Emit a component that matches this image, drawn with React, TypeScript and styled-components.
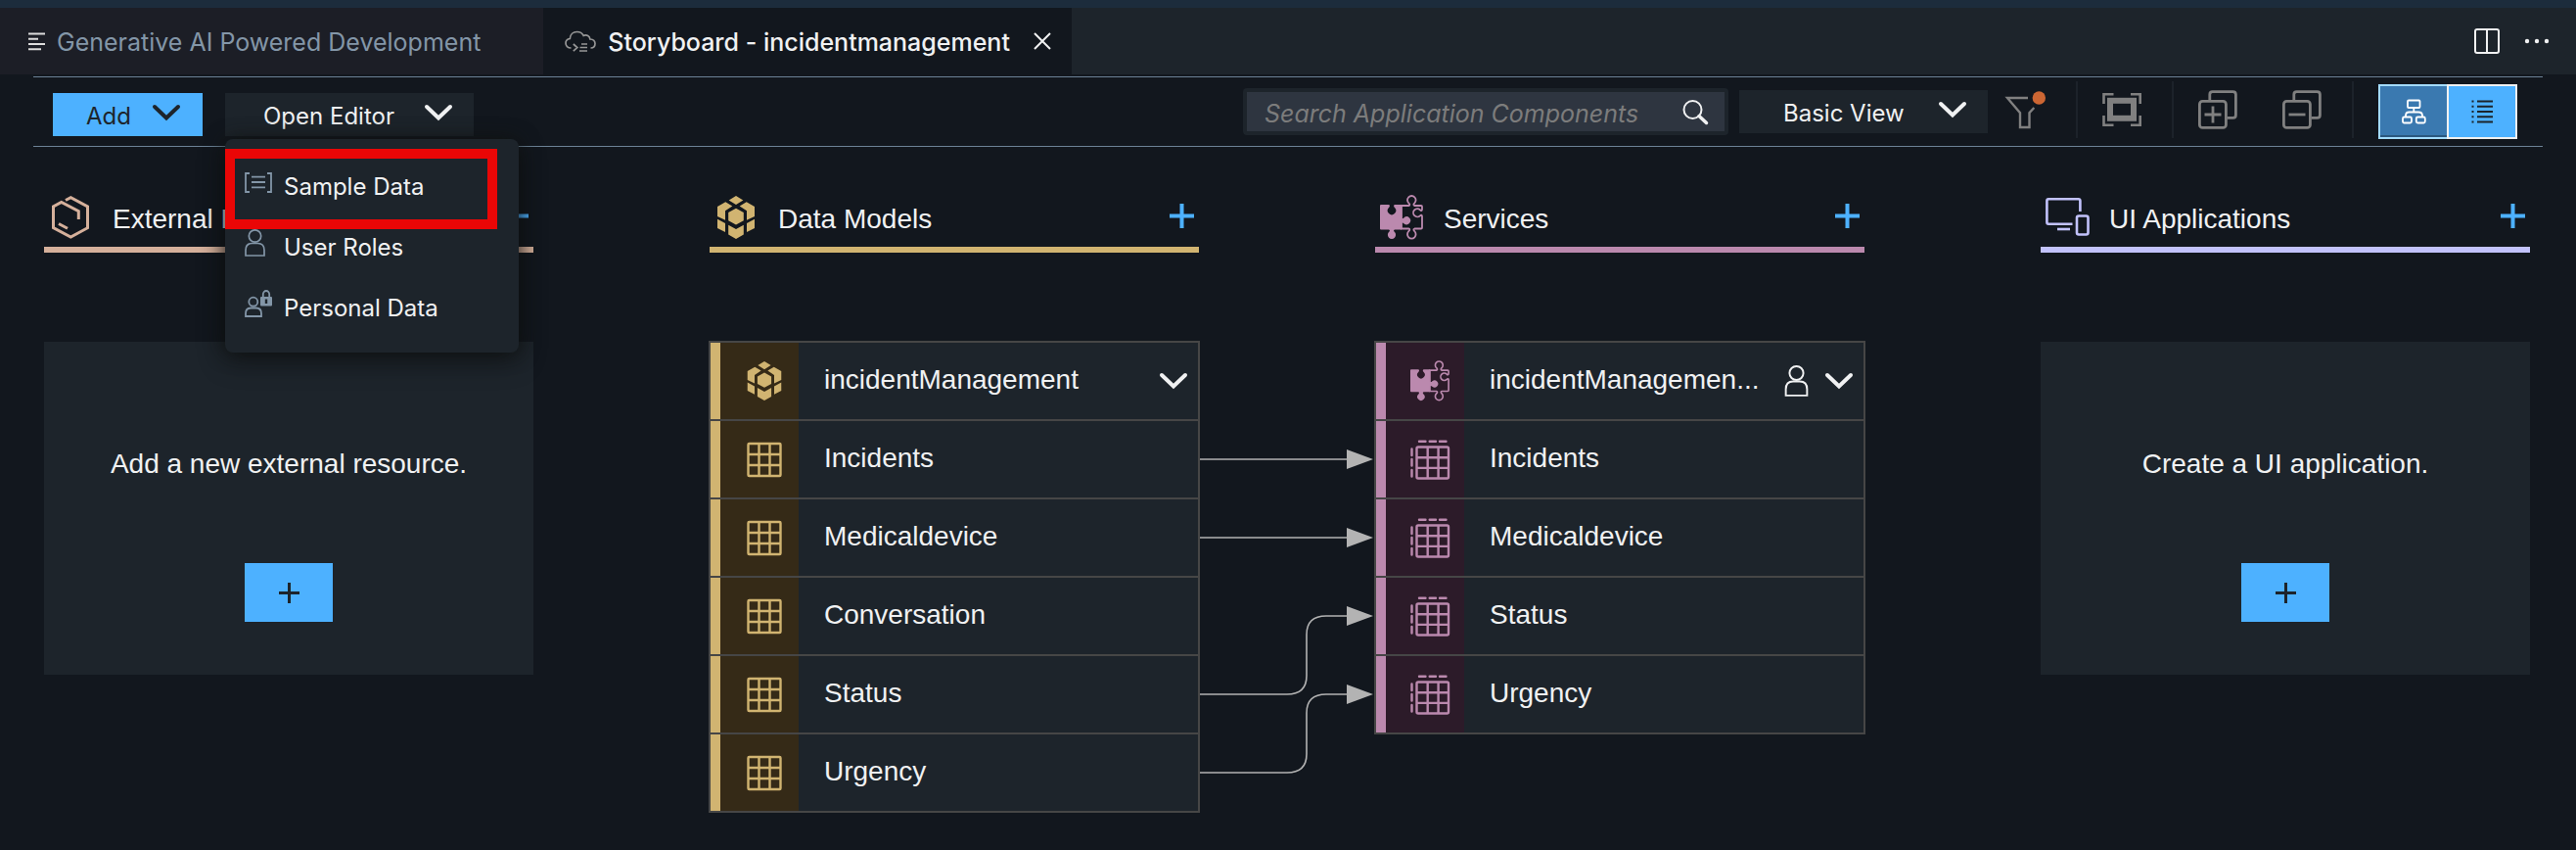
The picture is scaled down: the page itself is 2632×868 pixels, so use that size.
import React from 'react';
import styled, { createGlobalStyle } from 'styled-components';

const color = {
  page: '#12171e',
  surface: '#1d242b',
  tab: '#1c1e26',
  strip: '#1c2c3c',
  rule: '#6c8296',
  divider: '#1c222a',
  text: '#f0f1f2',
  muted: '#8396a8',
  toolIcon: '#808080',
  accent: '#4db1ff',
  nodeBorder: '#464646',
  wire: '#b3b3b3',
};

const uiFont = `Inter, 'Liberation Sans', sans-serif`;
const bodyFont = `'Liberation Sans', Arial, sans-serif`;

const GlobalStyle = createGlobalStyle`
  *, *::before, *::after { box-sizing: border-box; }
  body { margin: 0; background: ${color.page}; color: ${color.text}; font-family: ${bodyFont}; }
  button, input, select { font: inherit; color: inherit; border: 0; padding: 0; margin: 0; background: none; border-radius: 0; }
  button { cursor: pointer; }
  h1, h2, h3, p, ul { margin: 0; padding: 0; font: inherit; list-style: none; }
  svg { display: block; flex: none; overflow: visible; }
`;

/* ---------- layout ---------- */

const Page = styled.div`
  min-height: 100vh;
  background: ${color.page};
`;

const TabBar = styled.header`
  display: flex;
  height: 76px;
  border-top: 8px solid ${color.strip};
  background: ${color.surface};
  font-family: ${uiFont};
  font-size: 25px;
`;

const Tab = styled.div<{ $active?: boolean }>`
  display: flex;
  align-items: center;
  gap: 12px;
  padding: ${p => (p.$active ? '0 21px 0 22px' : '0 64px 0 29px')};
  background: ${p => (p.$active ? color.page : color.tab)};
  color: ${p => (p.$active ? color.text : color.muted)};
  font-weight: ${p => (p.$active ? 500 : 400)};
  white-space: nowrap;
`;

const TabLink = styled.a`
  padding-top: 2px;
  color: inherit;
  text-decoration: none;
`;

const TabClose = styled.button`
  margin-left: 12px;
`;

const TabActions = styled.div`
  display: flex;
  align-items: center;
  gap: 25px;
  margin-left: auto;
  padding-right: 27px;
`;

const Toolbar = styled.nav`
  display: flex;
  align-items: center;
  justify-content: space-between;
  height: 72px;
  margin: 2px 34px 0;
  padding: 0 26px 0 20px;
  border-top: 1px solid ${color.rule};
  border-bottom: 1px solid ${color.rule};
  font-family: ${uiFont};
  font-size: 24px;
`;

const ToolbarStart = styled.div`
  display: flex;
  gap: 23px;
  padding-top: 6px;
`;

const ToolbarEnd = styled.div`
  display: flex;
  align-items: center;
`;

const PrimaryButton = styled.button`
  display: flex;
  align-items: center;
  justify-content: space-between;
  width: 153px;
  height: 44px;
  padding: 0 23px 0 34px;
  background: ${color.accent};
  color: ${color.surface};
`;

const ButtonText = styled.span`
  padding-top: 3px;
`;

const ButtonArrow = styled.span`
  padding-bottom: 4px;
`;

const MenuAnchor = styled.div`
  position: relative;
`;

const MenuButton = styled.button`
  display: flex;
  align-items: center;
  justify-content: space-between;
  width: 254px;
  height: 44px;
  padding: 0 22px 0 39px;
  background: ${color.surface};
`;

const Menu = styled.ul`
  position: absolute;
  z-index: 2;
  top: calc(100% + 3px);
  left: 0;
  width: 300px;
  padding: 17px 0 15px;
  border-radius: 8px;
  background: ${color.surface};
  box-shadow: 0 8px 28px rgba(0, 0, 0, 0.4), 0 0 20px rgba(20, 22, 20, 0.8);
`;

const MenuItem = styled.button`
  display: flex;
  align-items: center;
  gap: 12px;
  width: 100%;
  height: 62px;
  padding: 0 20px;
  text-align: left;
`;

const MenuIcon = styled.span`
  display: flex;
  width: 28px;
  padding-bottom: 8px;
  color: ${color.muted};
`;

const Highlight = styled.div`
  position: absolute;
  top: 10px;
  left: 0;
  width: 278px;
  height: 82px;
  border: 10px solid #ea0606;
  pointer-events: none;
`;

const SearchBox = styled.label`
  display: flex;
  align-items: center;
  width: 496px;
  height: 48px;
  margin-right: 11px;
  padding: 0 17px 0 18px;
  border: 4px solid ${color.surface};
  border-radius: 4px;
  background: #2e3540;
`;

const SearchInput = styled.input.attrs({ type: 'text' })`
  flex: 1;
  min-width: 0;
  padding-top: 3px;
  font-family: ${uiFont};
  font-size: 25px;
  font-style: italic;
  outline: none;
  &::placeholder { color: #7c7c7c; opacity: 1; }
`;

const SelectBox = styled.div`
  position: relative;
  width: 254px;
  height: 44px;
  background: ${color.surface};
`;

const Select = styled.select`
  width: 100%;
  height: 100%;
  padding: 3px 60px 0 45px;
  appearance: none;
`;

const SelectArrow = styled.span`
  position: absolute;
  top: 12px;
  right: 22px;
  pointer-events: none;
`;

const ToolGroup = styled.div<{ $first?: boolean }>`
  display: flex;
  align-items: center;
  gap: 46px;
  height: 58px;
  margin-bottom: 4px;
  padding: ${p => (p.$first ? '0 31px 0 19px' : '0 31px 0 25px')};
  border-right: 2px solid ${color.divider};
  color: ${color.toolIcon};
`;

const Toggle = styled.div`
  display: flex;
  margin-left: 25px;
`;

const ToggleButton = styled.button<{ $on?: boolean }>`
  display: flex;
  align-items: center;
  justify-content: center;
  width: ${p => (p.$on ? 70 : 72)}px;
  height: 56px;
  border: 2px solid ${p => (p.$on ? '#a3dcff' : '#f0f0f0')};
  border-right-width: ${p => (p.$on ? 0 : 2)}px;
  background: ${p => (p.$on ? '#3a79b0' : color.accent)};
  box-shadow: ${p => (p.$on ? 'inset 0 -2px 0 #2b587f' : 'none')};
  color: ${p => (p.$on ? '#ffffff' : color.surface)};
`;

const Board = styled.main`
  display: grid;
  grid-template-columns: repeat(4, minmax(0, 1fr));
  gap: 180px;
  align-items: start;
  padding: 42px 47px 38px 45px;
  font-size: 28px;
  line-height: 32px;
`;

const ColumnHeader = styled.div<{ $tint: string }>`
  display: flex;
  align-items: center;
  gap: 21px;
  height: 66px;
  padding: 0 5px;
  border-bottom: 6px solid ${p => p.$tint};
  color: ${p => p.$tint};
`;

const ColumnTitle = styled.h2`
  flex: 1;
  padding-top: 4px;
  color: ${color.text};
  white-space: nowrap;
`;

const AddLink = styled.button`
  padding-bottom: 3px;
  color: ${color.accent};
`;

const Card = styled.div`
  display: flex;
  flex-direction: column;
  align-items: center;
  margin-top: 91px;
  padding: 109px 16px 54px;
  background: ${color.surface};
`;

const CardButton = styled.button`
  display: flex;
  align-items: center;
  justify-content: center;
  width: 90px;
  height: 60px;
  margin-top: 85px;
  background: ${color.accent};
  color: ${color.surface};
`;

const Node = styled.div`
  position: relative;
  margin: 90px -1px 0;
  border: 2px solid ${color.nodeBorder};
  background: ${color.surface};
`;

const NodeRow = styled.div`
  display: flex;
  align-items: center;
  height: 78px;
  & + & { height: 80px; border-top: 2px solid ${color.nodeBorder}; }
`;

const NodeIcon = styled.span<{ $tint: string; $shade: string }>`
  display: flex;
  align-items: center;
  align-self: stretch;
  width: 90px;
  padding-left: 25px;
  border-left: 10px solid ${p => p.$tint};
  background: ${p => p.$shade};
  color: ${p => p.$tint};
`;

const NodeLabel = styled.span`
  flex: 1;
  padding: 0 0 2px 26px;
  white-space: nowrap;
`;

const NodeActions = styled.span`
  display: flex;
  align-items: center;
  gap: 17px;
  padding-right: 11px;
`;

const Wires = styled.svg`
  position: absolute;
  top: 0;
  left: calc(100% + 2px);
  pointer-events: none;
`;

/* ---------- icons ---------- */

type StrokeProps = { w: number; h: number; sw?: number; children: React.ReactNode };

const Line = ({ w, h, sw = 2, children }: StrokeProps) => (
  <svg width={w} height={h} viewBox={`0 0 ${w} ${h}`} fill="none" stroke="currentColor" strokeWidth={sw} aria-hidden="true">
    {children}
  </svg>
);

const Chevron = () => (
  <Line w={28} h={16} sw={4}>
    <path d="M2 2 14 13.5 26 2" strokeLinecap="round" />
  </Line>
);

const Plus = ({ size, sw }: { size: number; sw: number }) => (
  <Line w={size} h={size} sw={sw}>
    <path d={`M${size / 2} 0V${size}M0 ${size / 2}H${size}`} />
  </Line>
);

const ListIcon = () => (
  <svg width="17" height="19" viewBox="0 0 17 19" fill="none" stroke="#dcdcdc" strokeWidth="2" aria-hidden="true">
    <path d="M0 1.5H17M0 6.8H10M0 12H17M0 17.3H13" />
  </svg>
);

const CloudIcon = () => (
  <svg width="32" height="22" viewBox="0 0 32 22" fill="none" stroke="#969696" strokeWidth="1.7" aria-hidden="true">
    <path d="M6.5 18C3 18 1 15.800 1 13 1 10.300 3 8.800 5.300 8.500 5.600 4 8.700 1.500 12.500 1.500 15.500 1.500 18 3 19.200 5.400 22.500 4 25.700 6 25.900 9 29 9.200 31 11 31 13.500 31 16.300 29 18 26.500 18" />
    <path d="M8.800 14l4 3.600-4 3.600M17 14h6M15.500 17.500h7.500M15 21h8" />
  </svg>
);

const CloseIcon = () => (
  <Line w={18} h={18} sw={2}>
    <path d="M1 1 17 17M17 1 1 17" />
  </Line>
);

const SplitIcon = () => (
  <Line w={26} h={26} sw={2}>
    <rect x="1" y="1" width="24" height="24" rx="2" />
    <path d="M13 1V25" />
  </Line>
);

const MoreIcon = () => (
  <svg width="26" height="6" viewBox="0 0 26 6" fill="currentColor" aria-hidden="true">
    <circle cx="3" cy="3" r="2.200" />
    <circle cx="13" cy="3" r="2.200" />
    <circle cx="23" cy="3" r="2.200" />
  </svg>
);

const SampleIcon = () => (
  <Line w={28} h={21} sw={1.8}>
    <path d="M5 1H1V20H5M23 1H27V20H23M7 4.700H21M7 10H21M7 15.300H21" />
  </Line>
);

const UserIcon = ({ w, h }: { w: number; h: number }) => (
  <svg width={w} height={h} viewBox="0 0 21 28" fill="none" stroke="currentColor" strokeWidth="1.7" aria-hidden="true">
    <circle cx="10.500" cy="7" r="6.200" />
    <path d="M1 27V21.500Q1 14.500 7.500 14.500H13.500Q20 14.500 20 21.500V27Z" />
  </svg>
);

const PrivacyIcon = () => (
  <Line w={28} h={28} sw={1.8}>
    <circle cx="8.800" cy="12.200" r="4.500" />
    <path d="M1 27V24Q1 18.500 6.500 18.500H11.500Q17 18.500 17 24V27Z" />
    <path d="M18.800 8V4.500a3.200 3.500 0 0 1 6.400 0V8" />
    <rect x="16" y="7" width="12" height="9.500" rx="1" fill="currentColor" stroke="none" />
    <path d="M22 9.500V14" stroke={color.surface} strokeWidth="2.400" />
  </Line>
);

const SearchIcon = () => (
  <svg width="26" height="25" viewBox="0 0 26 25" fill="none" stroke={color.text} aria-hidden="true">
    <circle cx="10.500" cy="10" r="9" strokeWidth="2" />
    <path d="M17 16.500 24.500 23.500" strokeWidth="3.500" strokeLinecap="round" />
  </svg>
);

const FilterIcon = () => (
  <Line w={40} h={40} sw={2.4}>
    <path d="M22 8H1L14 23.300V38H23.500V23.300L28.300 18" />
    <circle cx="33.300" cy="8" r="6.700" fill="#cc6633" stroke="none" />
  </Line>
);

const FitIcon = () => (
  <Line w={40} h={40} sw={2.6}>
    <path d="M1.500 14V4.300H11.500M29 4.300H38.700V14M38.700 26V35.700H29M11.500 35.700H1.500V26" />
    <rect x="8" y="10.800" width="24" height="18" strokeWidth="6" />
  </Line>
);

const CopyIcon = ({ minus }: { minus?: boolean }) => (
  <Line w={40} h={40} sw={2.8}>
    <path d="M11.800 11V4.500Q11.800 1.600 14.600 1.600H35.500Q38.400 1.600 38.400 4.500V25.500Q38.400 28.400 35.500 28.400H29.500" />
    <rect x="1.400" y="11.400" width="27" height="27" rx="3" />
    <path d={minus ? 'M6.500 25H23.500' : 'M6.500 25H23.500M15 16.500V33.500'} />
  </Line>
);

const TreeIcon = () => (
  <Line w={25} h={26} sw={1.8}>
    <rect x="6" y="1.500" width="12.500" height="7.500" rx="1" />
    <path d="M12.300 9V13.500M4 18.500V17Q4 13.500 7.500 13.500H17Q21 13.500 21 17V18.500" />
    <rect x="1" y="18.500" width="9" height="6" rx="1.500" />
    <rect x="14.800" y="18.500" width="9" height="6" rx="1.500" />
  </Line>
);

const RowsIcon = () => (
  <Line w={23} h={26} sw={2}>
    <path d="M6 2.500H22M6 7.700H22M6 13H22M6 18.300H22M6 23.500H22" />
    <path d="M0.500 2.500H2.500M0.500 7.700H2.500M0.500 13H2.500M0.500 18.300H2.500M0.500 23.500H2.500" />
  </Line>
);

const HexIcon = () => (
  <Line w={44} h={44} sw={3}>
    <path d="M17 4.500 22.300 1.700 39.500 11V32.700L22.300 42 4.500 32.700V11L12.700 6.500 30.300 15.700V24M10 28.500 19 33.300" />
  </Line>
);

const CubeIcon = ({ size = 44 }: { size?: number }) => (
  <svg width={size} height={size} viewBox="0 0 44 44" fill="currentColor" aria-hidden="true">
    <path d="M22 0 29.300 4.500 22 9 14.700 4.500Z" />
    <path d="M3 11 11.300 6.300 18.300 10.500 11 15.300V24.800L3 21Z" />
    <path d="M41 11 32.700 6.300 25.700 10.500 33 15.300V24.800L41 21Z" />
    <path d="M22 12.700 29.800 17V25.200L22 29.500 14.200 25.200V17Z" />
    <path d="M3 23.700 11 28V37L3 33Z" />
    <path d="M41 23.700 33 28V37L41 33Z" />
    <path d="M14.200 29.800 22 34 29.800 29.800V39.500L22 44 14.200 39.500Z" />
  </svg>
);

const PuzzleIcon = ({ size = 44 }: { size?: number }) => (
  <svg width={size} height={size} viewBox="0 0 44 44" fill="currentColor" aria-hidden="true">
    <path d="M1 9H9C10.500 9.500 10 11 9 12A4.200 4.200 0 1 0 15 12C14 11 13.500 9.500 15 9H22V23.200Q23.800 23.400 24.600 22.200A4 4 0 1 1 24.600 28.400Q23.800 27.400 22 27.600V34.400H15C13.500 34.800 14 36 14.800 36.800A4.100 4.100 0 1 1 9.200 36.800C10 36 10.500 34.800 9 34.400H1Q0 34.400 0 33.400V10Q0 9 1 9Z" />
    <path
      d="M22 10H29.300C31 9.700 30.300 8.300 29.300 7.400A4.300 4.300 0 1 1 35.300 7.400C34.300 8.300 33.800 9.700 35.300 10H42Q43 10 43 11V13.500C43 15.500 41.800 15.300 41 14.400A4.100 4.100 0 1 0 41 20.300C41.800 19.500 43 19.300 43 21V32.500Q43 33.500 42 33.500H35.300C33.800 33.900 34.300 35.300 35.300 36.200A4.300 4.300 0 1 1 29.300 36.200C30.300 35.300 31 33.900 29.300 33.500H22Z"
      fill="none"
      stroke="currentColor"
      strokeWidth="1.800"
    />
  </svg>
);

const DevicesIcon = () => (
  <Line w={44} h={44} sw={2.6}>
    <path d="M35.400 16V5Q35.400 3.300 33.700 3.300H3Q1.400 3.300 1.400 5V27Q1.400 28.700 3 28.700H27.500" />
    <path d="M12 34H25" />
    <rect x="32" y="20.500" width="11.500" height="19" rx="2" />
  </Line>
);

const TableIcon = () => (
  <Line w={40} h={40} sw={2.4}>
    <rect x="3.500" y="4" width="33" height="33" rx="1" />
    <path d="M14.500 4V37M25.500 4V37M3.500 15H36.500M3.500 26H36.500" />
  </Line>
);

const ProjectionIcon = () => (
  <Line w={40} h={40} sw={2.4}>
    <rect x="6.500" y="7.500" width="32.500" height="32" rx="1.500" />
    <path d="M17.700 7.500V39.500M28.600 7.500V39.500M6.500 18.200H39M6.500 28.900H39" />
    <path d="M9 1.700H15.500M19.700 1.700H26M30 1.700H36.500M1.500 9.500V16M1.500 20V26.500M1.500 31V37.500" strokeLinecap="round" />
  </Line>
);

/* ---------- data and screen ---------- */

const gold = { tint: '#d1b471', shade: '#352a17' };
const pink = { tint: '#bb89ae', shade: '#2c1b29' };

const models = ['Incidents', 'Medicaldevice', 'Conversation', 'Status', 'Urgency'];
const services = ['Incidents', 'Medicaldevice', 'Status', 'Urgency'];

const menuItems = [
  { label: 'Sample Data', icon: <SampleIcon /> },
  { label: 'User Roles', icon: <UserIcon w={21} h={28} /> },
  { label: 'Personal Data', icon: <PrivacyIcon /> },
];

const Header = ({ tint, icon, title }: { tint: string; icon: React.ReactNode; title: string }) => (
  <ColumnHeader $tint={tint}>
    {icon}
    <ColumnTitle>{title}</ColumnTitle>
    <AddLink aria-label={`Add to ${title}`}>
      <Plus size={25} sw={4} />
    </AddLink>
  </ColumnHeader>
);

const arrowRows = [119, 199, 279, 359];

export default function App() {
  return (
    <Page>
      <GlobalStyle />
      <TabBar>
        <Tab>
          <ListIcon />
          <TabLink href="#generative">Generative AI Powered Development</TabLink>
        </Tab>
        <Tab $active>
          <CloudIcon />
          <TabLink href="#storyboard">Storyboard - incidentmanagement</TabLink>
          <TabClose aria-label="Close tab">
            <CloseIcon />
          </TabClose>
        </Tab>
        <TabActions>
          <button aria-label="Split editor"><SplitIcon /></button>
          <button aria-label="More actions"><MoreIcon /></button>
        </TabActions>
      </TabBar>

      <Toolbar>
        <ToolbarStart>
          <PrimaryButton>
            <ButtonText>Add</ButtonText>
            <ButtonArrow><Chevron /></ButtonArrow>
          </PrimaryButton>
          <MenuAnchor>
            <MenuButton aria-haspopup="menu" aria-expanded="true">
              <ButtonText>Open Editor</ButtonText>
              <ButtonArrow><Chevron /></ButtonArrow>
            </MenuButton>
            <Menu>
              {menuItems.map(item => (
                <li key={item.label}>
                  <MenuItem>
                    <MenuIcon>{item.icon}</MenuIcon>
                    {item.label}
                  </MenuItem>
                </li>
              ))}
              <Highlight as="li" aria-hidden="true" />
            </Menu>
          </MenuAnchor>
        </ToolbarStart>

        <ToolbarEnd>
          <SearchBox>
            <SearchInput aria-label="Search Application Components" placeholder="Search Application Components" />
            <SearchIcon />
          </SearchBox>
          <SelectBox>
            <Select aria-label="View">
              <option>Basic View</option>
            </Select>
            <SelectArrow><Chevron /></SelectArrow>
          </SelectBox>
          <ToolGroup $first>
            <button aria-label="Filter"><FilterIcon /></button>
          </ToolGroup>
          <ToolGroup>
            <button aria-label="Fit to screen"><FitIcon /></button>
          </ToolGroup>
          <ToolGroup>
            <button aria-label="Expand all"><CopyIcon /></button>
            <button aria-label="Collapse all"><CopyIcon minus /></button>
          </ToolGroup>
          <Toggle>
            <ToggleButton $on aria-label="Graph view" aria-pressed="true"><TreeIcon /></ToggleButton>
            <ToggleButton aria-label="List view" aria-pressed="false"><RowsIcon /></ToggleButton>
          </Toggle>
        </ToolbarEnd>
      </Toolbar>

      <Board>
        <section>
          <Header tint="#d5b09b" icon={<HexIcon />} title="External Resources" />
          <Card>
            <p>Add a new external resource.</p>
            <CardButton aria-label="Add external resource"><Plus size={21} sw={3} /></CardButton>
          </Card>
        </section>

        <section>
          <Header tint={gold.tint} icon={<CubeIcon />} title="Data Models" />
          <Node>
            <NodeRow>
              <NodeIcon $tint={gold.tint} $shade={gold.shade}><CubeIcon size={40} /></NodeIcon>
              <NodeLabel>incidentManagement</NodeLabel>
              <NodeActions>
                <button aria-label="Collapse incidentManagement"><Chevron /></button>
              </NodeActions>
            </NodeRow>
            {models.map(name => (
              <NodeRow key={name}>
                <NodeIcon $tint={gold.tint} $shade={gold.shade}><TableIcon /></NodeIcon>
                <NodeLabel>{name}</NodeLabel>
              </NodeRow>
            ))}
            <Wires width="178" height="480" viewBox="0 0 178 480" fill="none" stroke={color.wire} strokeWidth="1.600" aria-hidden="true">
              <path d="M0 119H152M0 199H152" />
              <path d="M0 359H89Q109 359 109 340V298Q109 279 129 279H152" />
              <path d="M0 439H89Q109 439 109 420V378Q109 359 129 359H152" />
              {arrowRows.map(y => (
                <path key={y} d={`M150 ${y - 10}L177 ${y}L150 ${y + 10}Z`} fill={color.wire} stroke="none" />
              ))}
            </Wires>
          </Node>
        </section>

        <section>
          <Header tint={pink.tint} icon={<PuzzleIcon />} title="Services" />
          <Node>
            <NodeRow>
              <NodeIcon $tint={pink.tint} $shade={pink.shade}><PuzzleIcon size={40} /></NodeIcon>
              <NodeLabel>incidentManagemen...</NodeLabel>
              <NodeActions>
                <button aria-label="Required roles"><UserIcon w={25} h={32} /></button>
                <button aria-label="Collapse service"><Chevron /></button>
              </NodeActions>
            </NodeRow>
            {services.map(name => (
              <NodeRow key={name}>
                <NodeIcon $tint={pink.tint} $shade={pink.shade}><ProjectionIcon /></NodeIcon>
                <NodeLabel>{name}</NodeLabel>
              </NodeRow>
            ))}
          </Node>
        </section>

        <section>
          <Header tint="#c2c2fc" icon={<DevicesIcon />} title="UI Applications" />
          <Card>
            <p>Create a UI application.</p>
            <CardButton aria-label="Add UI application"><Plus size={21} sw={3} /></CardButton>
          </Card>
        </section>
      </Board>
    </Page>
  );
}
